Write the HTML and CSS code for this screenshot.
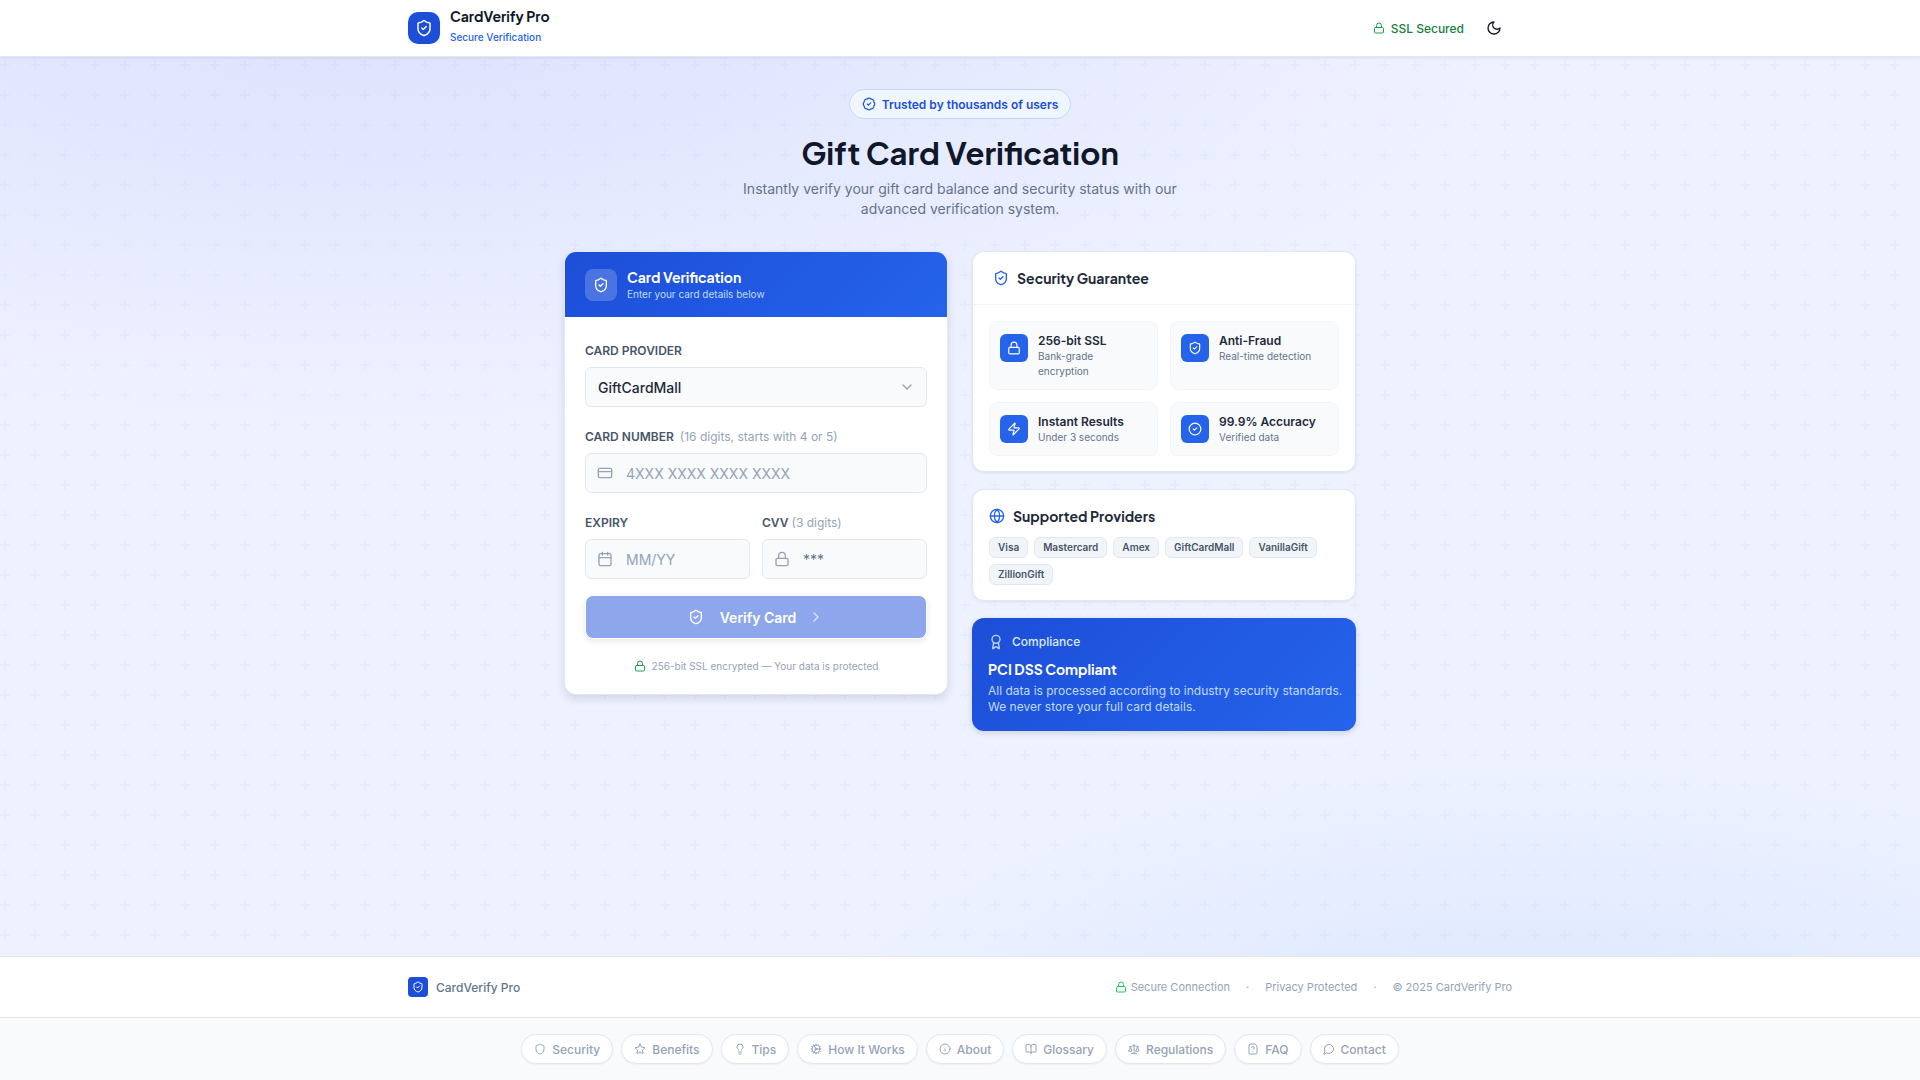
FILE: index.html
```html
<!DOCTYPE html>
<html lang="en">
<head>
  <meta charset="UTF-8">
  <meta name="viewport" content="width=device-width, initial-scale=1">
  <title>CardVerify Pro</title>
  <link rel="stylesheet" href="styles.css">
</head>
<body>

<!-- Icon set -->
<svg class="sprite" aria-hidden="true">
  <symbol id="shield-check" viewBox="0 0 24 24"><path d="M20 13c0 5-3.5 7.5-7.66 8.95a1 1 0 0 1-.67-.01C7.5 20.5 4 18 4 13V6a1 1 0 0 1 1-1c2 0 4.5-1.2 6.24-2.72a1.17 1.17 0 0 1 1.52 0C14.51 3.81 17 5 19 5a1 1 0 0 1 1 1z"/><path d="m9 12 2 2 4-4"/></symbol>
  <symbol id="shield" viewBox="0 0 24 24"><path d="M20 13c0 5-3.5 7.5-7.66 8.95a1 1 0 0 1-.67-.01C7.5 20.5 4 18 4 13V6a1 1 0 0 1 1-1c2 0 4.5-1.2 6.24-2.72a1.17 1.17 0 0 1 1.52 0C14.51 3.81 17 5 19 5a1 1 0 0 1 1 1z"/></symbol>
  <symbol id="lock" viewBox="0 0 24 24"><rect width="18" height="11" x="3" y="11" rx="2"/><path d="M7 11V7a5 5 0 0 1 10 0v4"/></symbol>
  <symbol id="moon" viewBox="0 0 24 24"><path d="M12 3a6 6 0 0 0 9 9 9 9 0 1 1-9-9Z"/></symbol>
  <symbol id="badge-check" viewBox="0 0 24 24"><path d="M3.85 8.62a4 4 0 0 1 4.78-4.77 4 4 0 0 1 6.74 0 4 4 0 0 1 4.78 4.78 4 4 0 0 1 0 6.74 4 4 0 0 1-4.77 4.78 4 4 0 0 1-6.75 0 4 4 0 0 1-4.78-4.77 4 4 0 0 1 0-6.76Z"/><path d="m9 12 2 2 4-4"/></symbol>
  <symbol id="circle-check" viewBox="0 0 24 24"><circle cx="12" cy="12" r="10"/><path d="m9 12 2 2 4-4"/></symbol>
  <symbol id="card" viewBox="0 0 24 24"><rect width="20" height="14" x="2" y="5" rx="2"/><path d="M2 10h20"/></symbol>
  <symbol id="calendar" viewBox="0 0 24 24"><path d="M8 2v4M16 2v4M3 10h18"/><rect width="18" height="18" x="3" y="4" rx="2"/></symbol>
  <symbol id="chevron-down" viewBox="0 0 24 24"><path d="m6 9 6 6 6-6"/></symbol>
  <symbol id="chevron-right" viewBox="0 0 24 24"><path d="m9 18 6-6-6-6"/></symbol>
  <symbol id="zap" viewBox="0 0 24 24"><path d="M4 14a1 1 0 0 1-.78-1.63l9.9-10.2a.5.5 0 0 1 .86.46l-1.92 6.02A1 1 0 0 0 13 10h7a1 1 0 0 1 .78 1.63l-9.9 10.2a.5.5 0 0 1-.86-.46l1.92-6.02A1 1 0 0 0 11 14z"/></symbol>
  <symbol id="globe" viewBox="0 0 24 24"><circle cx="12" cy="12" r="10"/><path d="M12 2a14.5 14.5 0 0 0 0 20 14.5 14.5 0 0 0 0-20M2 12h20"/></symbol>
  <symbol id="award" viewBox="0 0 24 24"><path d="m15.48 12.89 1.51 8.53a.5.5 0 0 1-.81.47l-3.58-2.69a1 1 0 0 0-1.2 0l-3.58 2.69a.5.5 0 0 1-.81-.47l1.51-8.53"/><circle cx="12" cy="8" r="6"/></symbol>
  <symbol id="star" viewBox="0 0 24 24"><path d="M12 2l3.09 6.26L22 9.27l-5 4.87 1.18 6.88L12 17.77l-6.18 3.25L7 14.14 2 9.27l6.91-1.01z"/></symbol>
  <symbol id="bulb" viewBox="0 0 24 24"><path d="M15 14c.2-1 .7-1.7 1.5-2.5 1-.9 1.5-2.2 1.5-3.5A6 6 0 0 0 6 8c0 1 .2 2.2 1.5 3.5.7.7 1.3 1.5 1.5 2.5M9 18h6M10 22h4"/></symbol>
  <symbol id="cog" viewBox="0 0 24 24"><circle cx="12" cy="12" r="8"/><circle cx="12" cy="12" r="2"/><path d="M12 2v2M12 22v-2M17 20.66l-1-1.73M11 10.27 7 3.34M20.66 17l-1.73-1M3.34 7l1.73 1M14 12h8M2 12h2M20.66 7l-1.73 1M3.34 17l1.73-1M17 3.34l-1 1.73M11 13.73l-4 6.93"/></symbol>
  <symbol id="info" viewBox="0 0 24 24"><circle cx="12" cy="12" r="10"/><path d="M12 16v-4M12 8h.01"/></symbol>
  <symbol id="book" viewBox="0 0 24 24"><path d="M12 7v14M3 18a1 1 0 0 1-1-1V4a1 1 0 0 1 1-1h5a4 4 0 0 1 4 4 4 4 0 0 1 4-4h5a1 1 0 0 1 1 1v13a1 1 0 0 1-1 1h-6a3 3 0 0 0-3 3 3 3 0 0 0-3-3z"/></symbol>
  <symbol id="scale" viewBox="0 0 24 24"><path d="m16 16 3-8 3 8c-.87.65-1.92 1-3 1s-2.13-.35-3-1ZM2 16l3-8 3 8c-.87.65-1.92 1-3 1s-2.13-.35-3-1ZM7 21h10M12 3v18M3 7h2c2 0 5-1 7-2 2 1 5 2 7 2h2"/></symbol>
  <symbol id="file-question" viewBox="0 0 24 24"><path d="M15 2H6a2 2 0 0 0-2 2v16a2 2 0 0 0 2 2h12a2 2 0 0 0 2-2V7ZM12 17h.01M9.1 9a3 3 0 0 1 5.82 1c0 2-3 3-3 3"/></symbol>
  <symbol id="message" viewBox="0 0 24 24"><path d="M7.9 20A9 9 0 1 0 4 16.1L2 22Z"/></symbol>
</svg>

<header class="site-header">
  <div class="container header-inner">
    <div class="brand">
      <span class="brand-icon"><svg class="icon icon-18"><use href="#shield-check"/></svg></span>
      <div class="brand-text">
        <div class="brand-name">CardVerify Pro</div>
        <div class="brand-sub">Secure Verification</div>
      </div>
    </div>
    <div class="header-right">
      <span class="ssl"><svg class="icon icon-12"><use href="#lock"/></svg>SSL Secured</span>
      <button class="theme-btn" type="button" aria-label="Toggle theme"><svg class="icon icon-16"><use href="#moon"/></svg></button>
    </div>
  </div>
</header>

<main>
  <section class="hero">
    <span class="badge"><svg class="icon icon-14"><use href="#badge-check"/></svg>Trusted by thousands of users</span>
    <h1>Gift Card Verification</h1>
    <p>Instantly verify your gift card balance and security status with our advanced verification system.</p>
  </section>

  <div class="columns">
    <!-- Form -->
    <section class="card form-card">
      <div class="form-head">
        <span class="form-icon"><svg class="icon icon-16"><use href="#shield-check"/></svg></span>
        <div>
          <h2>Card Verification</h2>
          <p>Enter your card details below</p>
        </div>
      </div>
      <form class="form-body">
        <div class="field">
          <label for="provider">CARD PROVIDER</label>
          <div class="control">
            <select id="provider">
              <option>GiftCardMall</option>
              <option>VanillaGift</option>
              <option>ZillionGift</option>
            </select>
            <svg class="icon icon-16 chevron"><use href="#chevron-down"/></svg>
          </div>
        </div>
        <div class="field">
          <label for="number">CARD NUMBER <span class="hint wide">(16 digits, starts with 4 or 5)</span></label>
          <div class="control">
            <svg class="icon icon-16 lead"><use href="#card"/></svg>
            <input type="text" id="number" placeholder="4XXX XXXX XXXX XXXX">
          </div>
        </div>
        <div class="field-row">
          <div class="field">
            <label for="expiry">EXPIRY</label>
            <div class="control">
              <svg class="icon icon-16 lead"><use href="#calendar"/></svg>
              <input type="text" id="expiry" placeholder="MM/YY">
            </div>
          </div>
          <div class="field">
            <label for="cvv">CVV <span class="hint">(3 digits)</span></label>
            <div class="control">
              <svg class="icon icon-16 lead"><use href="#lock"/></svg>
              <input type="password" id="cvv" class="cvv" placeholder="***">
            </div>
          </div>
        </div>
        <button class="verify" type="submit" disabled>
          <svg class="icon icon-16"><use href="#shield-check"/></svg>
          <span>Verify Card</span>
          <svg class="icon icon-16 arrow"><use href="#chevron-right"/></svg>
        </button>
        <p class="note"><svg class="icon icon-12"><use href="#lock"/></svg>256-bit SSL encrypted — Your data is protected</p>
      </form>
    </section>

    <!-- Sidebar -->
    <aside class="side">
      <section class="card">
        <div class="guarantee-head">
          <svg class="icon icon-16"><use href="#shield-check"/></svg>
          <h3>Security Guarantee</h3>
        </div>
        <div class="features">
          <div class="feature">
            <span class="feature-icon"><svg class="icon icon-14"><use href="#lock"/></svg></span>
            <div><h4>256-bit SSL</h4><p>Bank-grade encryption</p></div>
          </div>
          <div class="feature">
            <span class="feature-icon"><svg class="icon icon-14"><use href="#shield-check"/></svg></span>
            <div><h4>Anti-Fraud</h4><p>Real-time detection</p></div>
          </div>
          <div class="feature">
            <span class="feature-icon"><svg class="icon icon-14"><use href="#zap"/></svg></span>
            <div><h4>Instant Results</h4><p>Under 3 seconds</p></div>
          </div>
          <div class="feature">
            <span class="feature-icon"><svg class="icon icon-14"><use href="#circle-check"/></svg></span>
            <div><h4>99.9% Accuracy</h4><p>Verified data</p></div>
          </div>
        </div>
      </section>

      <section class="card providers">
        <div class="providers-head">
          <svg class="icon icon-16"><use href="#globe"/></svg>
          <h3>Supported Providers</h3>
        </div>
        <div class="chips">
          <span>Visa</span>
          <span>Mastercard</span>
          <span>Amex</span>
          <span>GiftCardMall</span>
          <span>VanillaGift</span>
          <span>ZillionGift</span>
        </div>
      </section>

      <section class="compliance">
        <div class="compliance-label"><svg class="icon icon-16"><use href="#award"/></svg>Compliance</div>
        <h3>PCI DSS Compliant</h3>
        <p>All data is processed according to industry security standards. We never store your full card details.</p>
      </section>
    </aside>
  </div>
</main>

<footer>
  <div class="footer-main">
    <div class="container footer-inner">
      <div class="footer-brand"><span class="footer-icon"><svg class="icon icon-12"><use href="#shield-check"/></svg></span>CardVerify Pro</div>
      <div class="footer-info">
        <span class="secure"><svg class="icon icon-12"><use href="#lock"/></svg>Secure Connection</span>
        <span>·</span>
        <span>Privacy Protected</span>
        <span>·</span>
        <span>© 2025 CardVerify Pro</span>
      </div>
    </div>
  </div>
  <nav class="footer-nav">
    <a href="#security"><svg class="icon icon-12"><use href="#shield"/></svg>Security</a>
    <a href="#benefits"><svg class="icon icon-12"><use href="#star"/></svg>Benefits</a>
    <a href="#tips"><svg class="icon icon-12"><use href="#bulb"/></svg>Tips</a>
    <a href="#how"><svg class="icon icon-12"><use href="#cog"/></svg>How It Works</a>
    <a href="#about"><svg class="icon icon-12"><use href="#info"/></svg>About</a>
    <a href="#glossary"><svg class="icon icon-12"><use href="#book"/></svg>Glossary</a>
    <a href="#regulations"><svg class="icon icon-12"><use href="#scale"/></svg>Regulations</a>
    <a href="#faq"><svg class="icon icon-12"><use href="#file-question"/></svg>FAQ</a>
    <a href="#contact"><svg class="icon icon-12"><use href="#message"/></svg>Contact</a>
  </nav>
</footer>

</body>
</html>
```
FILE: styles.css
```css
* {
  box-sizing: border-box;
}
body {
  margin: 0;
  min-height: 100vh;
  display: flex;
  flex-direction: column;
  font-family: Inter, "Liberation Sans", sans-serif;
  font-size: 14px;
  color: #0f172a;
  background:
    url("data:image/svg+xml,%3Csvg xmlns='http://www.w3.org/2000/svg' width='30' height='30'%3E%3Cpath d='M4 0h2v10h-2zM0 4h10v2h-10z' fill='%232563eb' fill-opacity='.03'/%3E%3C/svg%3E"),
    radial-gradient(ellipse 60% 40% at 20% 0%, rgba(99, 102, 241, 0.12), transparent),
    radial-gradient(ellipse 40% 30% at 80% 100%, rgba(59, 130, 246, 0.12), transparent),
    #eef2ff;
}
h1, h2, h3, h4, p {
  margin: 0;
}
h1, h2, h3, .brand-name {
  font-family: "Plus Jakarta Sans", Inter, "Liberation Sans", sans-serif;
  font-weight: 700;
}
input, select, button {
  font-family: inherit;
}
.sprite {
  display: none;
}

/* Icons */
.icon {
  display: block;
  flex-shrink: 0;
  fill: none;
  stroke: currentColor;
  stroke-width: 2;
  stroke-linecap: round;
  stroke-linejoin: round;
}
.icon-12 {
  width: 12px;
  height: 12px;
}
.icon-14 {
  width: 14px;
  height: 14px;
}
.icon-16 {
  width: 16px;
  height: 16px;
}
.icon-18 {
  width: 18px;
  height: 18px;
}

.container {
  width: 100%;
  max-width: 1152px;
  margin: 0 auto;
  padding: 0 24px;
}

/* Header */
.site-header {
  background: #fff;
  border-bottom: 1px solid #e2e8f0;
  box-shadow: 0 1px 3px rgba(15, 23, 42, 0.08);
}
.header-inner {
  height: 56px;
  display: flex;
  align-items: center;
  justify-content: space-between;
}
.brand {
  display: flex;
  align-items: center;
  gap: 10px;
}
.brand-icon {
  width: 32px;
  height: 32px;
  display: grid;
  place-items: center;
  border-radius: 10px;
  background: #1d4ed8;
  color: #fff;
}
.brand-text {
  padding-bottom: 3px;
}
.brand-name {
  font-size: 14px;
  line-height: 20px;
}
.brand-sub {
  margin-top: 1px;
  font-size: 10px;
  line-height: 20px;
  font-weight: 500;
  color: #2563eb;
}
.header-right {
  display: flex;
  align-items: center;
  gap: 12px;
}
.ssl {
  display: flex;
  align-items: center;
  gap: 6px;
  font-size: 12px;
  font-weight: 500;
  color: #15803d;
}
.ssl .icon {
  color: #16a34a;
}
.theme-btn {
  width: 36px;
  height: 36px;
  display: grid;
  place-items: center;
  padding: 0;
  border: none;
  background: none;
  color: #0f172a;
  cursor: pointer;
}

/* Hero */
main {
  flex: 1;
  width: 100%;
  max-width: 840px;
  margin: 0 auto;
  padding: 32px 24px;
}
.hero {
  display: flex;
  flex-direction: column;
  align-items: center;
  text-align: center;
}
.badge {
  display: flex;
  align-items: center;
  gap: 6px;
  height: 30px;
  padding: 0 12px;
  border: 1px solid #bfdbfe;
  border-radius: 15px;
  background: #eff6ff;
  color: #1d4ed8;
  font-size: 12px;
  font-weight: 600;
}
.hero h1 {
  margin-top: 14px;
  font-size: 31px;
  line-height: 40px;
}
.hero p {
  max-width: 448px;
  margin-top: 6px;
  line-height: 20px;
  color: #64748b;
}

/* Cards */
.columns {
  display: grid;
  grid-template-columns: 1fr 1fr;
  gap: 24px;
  align-items: start;
  margin-top: 32px;
}
.card {
  border: 1px solid #e2e8f0;
  border-radius: 12px;
  background: #fff;
  box-shadow: 0 1px 3px rgba(15, 23, 42, 0.08);
  overflow: hidden;
}
.form-card {
  box-shadow: 0 4px 8px rgba(15, 23, 42, 0.12);
}
.form-head {
  display: flex;
  align-items: center;
  gap: 10px;
  height: 65px;
  padding: 0 20px;
  background: linear-gradient(135deg, #1d4ed8, #2563eb);
  color: #fff;
}
.form-icon {
  width: 32px;
  height: 32px;
  display: grid;
  place-items: center;
  border-radius: 8px;
  background: rgba(255, 255, 255, 0.2);
}
.form-head h2 {
  font-size: 14px;
  line-height: 18px;
}
.form-head p {
  font-size: 10px;
  line-height: 16px;
  color: #bfdbfe;
}
.form-body {
  padding: 25px 20px 20px;
}
.field {
  margin-bottom: 21px;
}
.field label {
  display: block;
  margin-bottom: 7px;
  font-size: 12px;
  line-height: 18px;
  font-weight: 600;
  color: #475569;
}
.hint {
  font-weight: 400;
  color: #94a3b8;
}
.wide {
  margin-left: 3px;
}
.field-row {
  display: grid;
  grid-template-columns: 1fr 1fr;
  gap: 12px;
}
.field-row .field {
  margin-bottom: 16px;
}
.control {
  position: relative;
}
.control input,
.control select {
  display: block;
  width: 100%;
  height: 40px;
  padding: 0 12px;
  border: 1px solid #e2e8f0;
  border-radius: 6px;
  background: #f8fafc;
  font-size: 14px;
  color: #1e293b;
}
.control select {
  appearance: none;
  font-weight: 500;
}
.control input {
  padding-left: 40px;
}
.control input::placeholder {
  color: #94a3b8;
}
.control .cvv::placeholder {
  color: #64748b;
}
.lead,
.chevron {
  position: absolute;
  top: 12px;
  left: 12px;
  color: #94a3b8;
  pointer-events: none;
}
.chevron {
  left: auto;
  right: 12px;
}
.verify {
  width: 100%;
  height: 44px;
  display: flex;
  align-items: center;
  justify-content: center;
  gap: 16px;
  border: 1px solid #fff;
  border-radius: 8px;
  background: #8ea6eb;
  box-shadow: 0 2px 6px rgba(15, 23, 42, 0.1);
  color: #fff;
  font-size: 14px;
  font-weight: 600;
}
.verify .arrow {
  margin-left: -4px;
  opacity: 0.7;
}
.note {
  display: flex;
  align-items: center;
  justify-content: center;
  gap: 6px;
  margin-top: 19px;
  font-size: 10px;
  line-height: 16px;
  color: #94a3b8;
}
.note .icon {
  color: #16a34a;
}

/* Sidebar */
.side {
  display: flex;
  flex-direction: column;
  gap: 17px;
}
.side h3 {
  font-size: 14px;
  line-height: 20px;
}
.guarantee-head {
  display: flex;
  align-items: center;
  gap: 8px;
  height: 53px;
  padding: 0 20px;
  border-bottom: 1px solid #f1f5f9;
}
.guarantee-head h3,
.providers-head h3 {
  color: #1e293b;
}
.guarantee-head .icon,
.providers-head .icon {
  color: #2563eb;
}
.features {
  display: grid;
  grid-template-columns: 1fr 1fr;
  gap: 12px;
  padding: 16px 16px 15px;
}
.feature {
  display: flex;
  align-items: flex-start;
  gap: 10px;
  padding: 10px 16px 10px 10px;
  border: 1px solid #f1f5f9;
  border-radius: 8px;
  background: #f8fafc;
}
.feature-icon {
  width: 28px;
  height: 28px;
  display: grid;
  flex-shrink: 0;
  place-items: center;
  margin-top: 2px;
  border-radius: 6px;
  background: #2563eb;
  color: #fff;
}
.feature h4 {
  font-size: 12px;
  line-height: 17px;
  font-weight: 600;
  color: #1e293b;
}
.feature p {
  font-size: 10px;
  line-height: 15px;
  color: #64748b;
}
.providers {
  padding: 16px 16px 15px;
}
.providers-head {
  display: flex;
  align-items: center;
  gap: 8px;
}
.chips {
  display: flex;
  flex-wrap: wrap;
  gap: 6px;
  margin-top: 11px;
}
.chips span {
  padding: 2px 8px;
  border: 1px solid #e2e8f0;
  border-radius: 6px;
  background: #f1f5f9;
  color: #475569;
  font-size: 10px;
  line-height: 15px;
  font-weight: 600;
}
.compliance {
  padding: 16px 12px 16px 16px;
  border-radius: 12px;
  background: linear-gradient(135deg, #1d4ed8, #2563eb);
  box-shadow: 0 2px 6px rgba(15, 23, 42, 0.14);
  color: #fff;
}
.compliance-label {
  display: flex;
  align-items: center;
  gap: 8px;
  font-size: 12px;
  line-height: 16px;
  font-weight: 500;
  color: #dbeafe;
}
.compliance .icon {
  color: #bfdbfe;
}
.compliance h3 {
  margin-top: 9px;
}
.compliance p {
  margin-top: 4px;
  font-size: 12px;
  line-height: 16px;
  color: #bfdbfe;
}

/* Footer */
.footer-main {
  border-top: 1px solid #e2e8f0;
  border-bottom: 1px solid #e2e8f0;
  background: #fff;
}
.footer-inner {
  height: 60px;
  display: flex;
  align-items: center;
  justify-content: space-between;
}
.footer-brand {
  display: flex;
  align-items: center;
  gap: 8px;
  font-size: 12px;
  font-weight: 500;
  color: #64748b;
}
.footer-icon {
  width: 20px;
  height: 20px;
  display: grid;
  place-items: center;
  border-radius: 4px;
  background: #1d4ed8;
  color: #fff;
}
.footer-info {
  display: flex;
  align-items: center;
  gap: 16px;
  font-size: 11px;
  color: #94a3b8;
}
.secure {
  display: flex;
  align-items: center;
  gap: 4px;
}
.secure .icon {
  color: #22c55e;
}
.footer-nav {
  display: flex;
  flex-wrap: wrap;
  justify-content: center;
  gap: 8px;
  padding: 16px 24px;
  background: #f8fafc;
}
.footer-nav a {
  display: flex;
  align-items: center;
  gap: 6px;
  height: 30px;
  padding: 0 12px;
  border: 1px solid #e2e8f0;
  border-radius: 15px;
  background: #fff;
  box-shadow: 0 1px 2px rgba(15, 23, 42, 0.05);
  color: #94a3b8;
  font-size: 12px;
  font-weight: 500;
  text-decoration: none;
}
```
